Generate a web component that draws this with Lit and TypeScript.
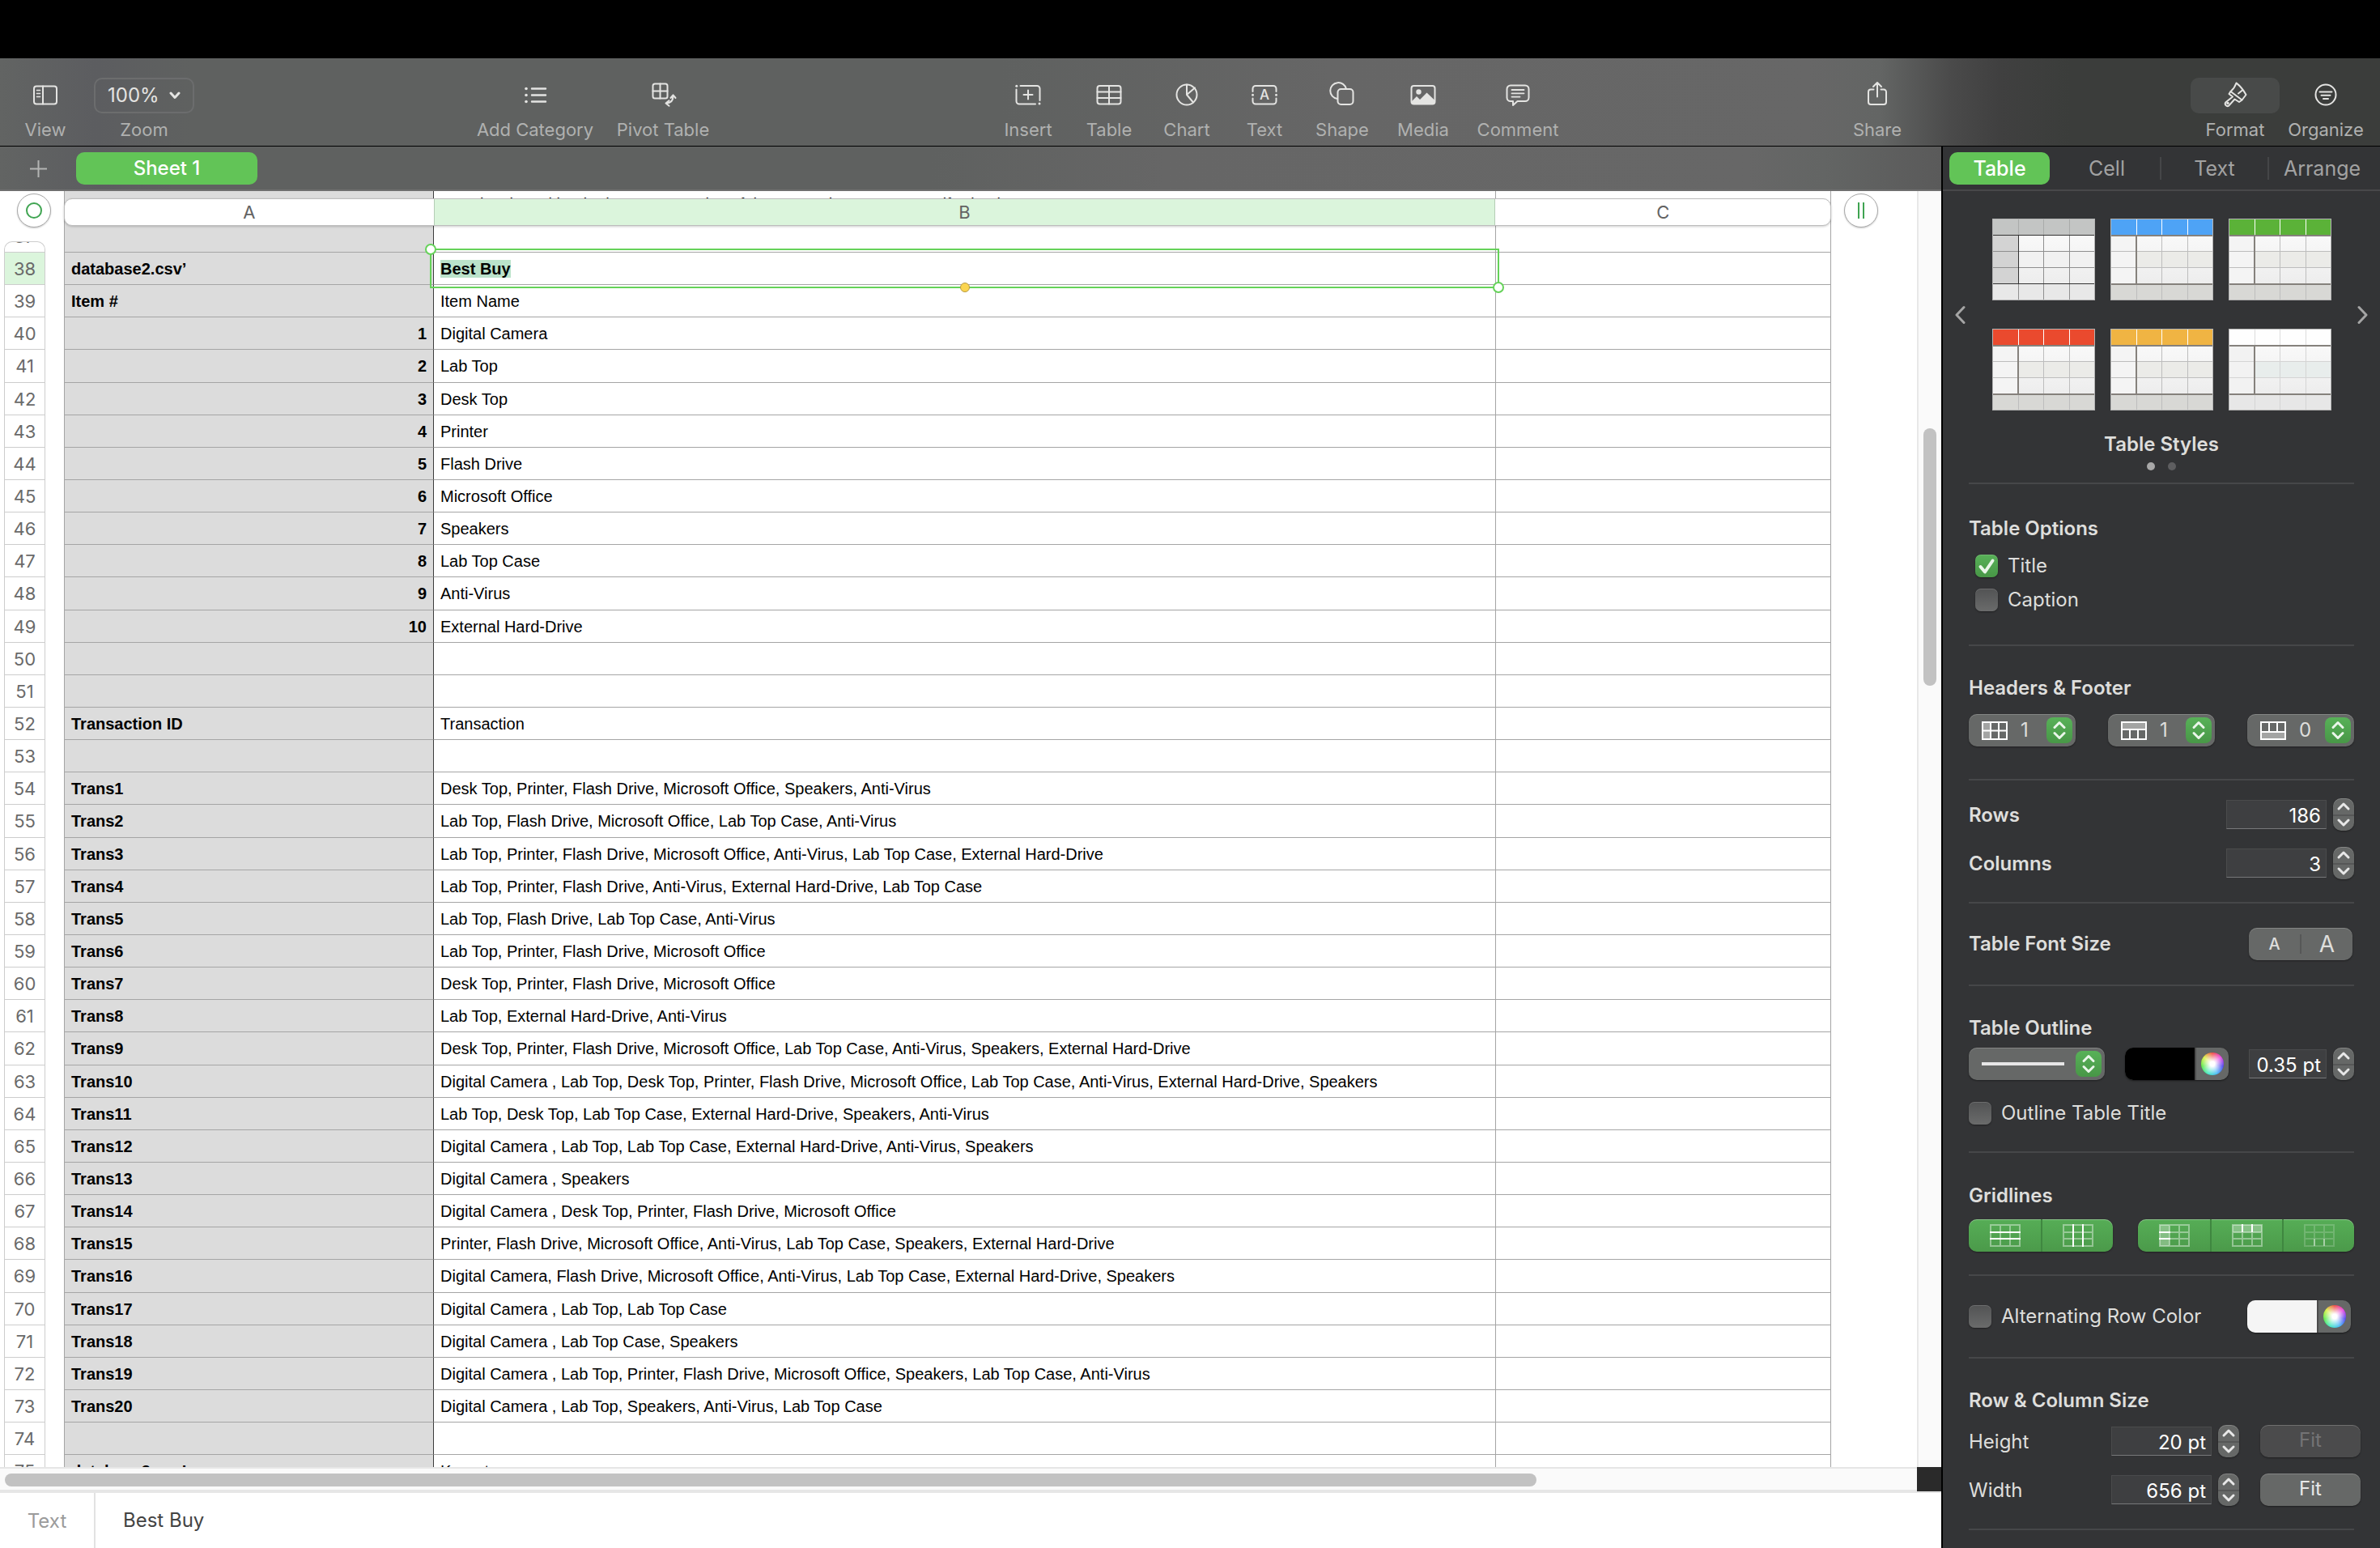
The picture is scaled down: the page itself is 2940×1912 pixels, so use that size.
import { LitElement, html, css, svg, nothing } from "lit";
import { customElement } from "lit/decorators.js";
import { classMap } from "lit/directives/class-map.js";
import { styleMap } from "lit/directives/style-map.js";

type Row = { n: number; a: string; b: string };

const rows: Row[] = [
  { n: 36, a: "Team Memo", b: "A Project in Oakland: The Country Price of the Bay Delaware Day, Bedford Lake" },
  { n: 37, a: "", b: "" },
  { n: 38, a: "database2.csv’", b: "Best Buy" },
  { n: 39, a: "Item #", b: "Item Name" },
  { n: 40, a: "1", b: "Digital Camera" },
  { n: 41, a: "2", b: "Lab Top" },
  { n: 42, a: "3", b: "Desk Top" },
  { n: 43, a: "4", b: "Printer" },
  { n: 44, a: "5", b: "Flash Drive" },
  { n: 45, a: "6", b: "Microsoft Office" },
  { n: 46, a: "7", b: "Speakers" },
  { n: 47, a: "8", b: "Lab Top Case" },
  { n: 48, a: "9", b: "Anti-Virus" },
  { n: 49, a: "10", b: "External Hard-Drive" },
  { n: 50, a: "", b: "" },
  { n: 51, a: "", b: "" },
  { n: 52, a: "Transaction ID", b: "Transaction" },
  { n: 53, a: "", b: "" },
  { n: 54, a: "Trans1", b: "Desk Top, Printer, Flash Drive, Microsoft Office, Speakers, Anti-Virus" },
  { n: 55, a: "Trans2", b: "Lab Top, Flash Drive, Microsoft Office, Lab Top Case, Anti-Virus" },
  { n: 56, a: "Trans3", b: "Lab Top, Printer, Flash Drive, Microsoft Office, Anti-Virus, Lab Top Case, External Hard-Drive" },
  { n: 57, a: "Trans4", b: "Lab Top, Printer, Flash Drive, Anti-Virus, External Hard-Drive, Lab Top Case" },
  { n: 58, a: "Trans5", b: "Lab Top, Flash Drive, Lab Top Case, Anti-Virus" },
  { n: 59, a: "Trans6", b: "Lab Top, Printer, Flash Drive, Microsoft Office" },
  { n: 60, a: "Trans7", b: "Desk Top, Printer, Flash Drive, Microsoft Office" },
  { n: 61, a: "Trans8", b: "Lab Top, External Hard-Drive, Anti-Virus" },
  { n: 62, a: "Trans9", b: "Desk Top, Printer, Flash Drive, Microsoft Office, Lab Top Case, Anti-Virus, Speakers, External Hard-Drive" },
  { n: 63, a: "Trans10", b: "Digital Camera , Lab Top, Desk Top, Printer, Flash Drive, Microsoft Office, Lab Top Case, Anti-Virus, External Hard-Drive, Speakers" },
  { n: 64, a: "Trans11", b: "Lab Top, Desk Top, Lab Top Case, External Hard-Drive, Speakers, Anti-Virus" },
  { n: 65, a: "Trans12", b: "Digital Camera , Lab Top, Lab Top Case, External Hard-Drive, Anti-Virus, Speakers" },
  { n: 66, a: "Trans13", b: "Digital Camera , Speakers" },
  { n: 67, a: "Trans14", b: "Digital Camera , Desk Top, Printer, Flash Drive, Microsoft Office" },
  { n: 68, a: "Trans15", b: "Printer, Flash Drive, Microsoft Office, Anti-Virus, Lab Top Case, Speakers, External Hard-Drive" },
  { n: 69, a: "Trans16", b: "Digital Camera, Flash Drive, Microsoft Office, Anti-Virus, Lab Top Case, External Hard-Drive, Speakers" },
  { n: 70, a: "Trans17", b: "Digital Camera , Lab Top, Lab Top Case" },
  { n: 71, a: "Trans18", b: "Digital Camera , Lab Top Case, Speakers" },
  { n: 72, a: "Trans19", b: "Digital Camera , Lab Top, Printer, Flash Drive, Microsoft Office, Speakers, Lab Top Case, Anti-Virus" },
  { n: 73, a: "Trans20", b: "Digital Camera , Lab Top, Speakers, Anti-Virus, Lab Top Case" },
  { n: 74, a: "", b: "" },
  { n: 75, a: "database3.csv’", b: "K-mart" },
];

const SELECTED = 38;
const isTall = (n: number) => n % 7 === 6 && n > 40;

const icons = {
  view: svg`<rect x="6" y="9.5" width="28" height="22" rx="3"/><path d="M17 9.5v22"/><path d="M9.5 14.5h4M9.5 18.5h4M9.5 22.5h4" stroke-width="1.6"/>`,
  category: svg`<g fill="currentColor" stroke="none"><circle cx="9" cy="12.5" r="1.8"/><circle cx="9" cy="20.5" r="1.8"/><circle cx="9" cy="28.5" r="1.8"/></g><path d="M16 12.5h17M16 20.5h17M16 28.5h17" stroke-width="2.4"/>`,
  pivot: svg`<rect x="7.5" y="6.5" width="18" height="18" rx="2.5"/><path d="M16.5 6.5v18M7.5 15.5h18M32.5 21c0 6-3 9.500-8.500 9.500M29.500 24l3-3.600 3 3.600M27.500 27.200L23.500 30.500l4 3.300"/>`,
  insert: svg`<path d="M10.500 9H31a3.500 3.500 0 0 1 3.500 3.500V27M29 31.500H9A3.500 3.500 0 0 1 5.500 28V13.500M20 14.500v11M14.500 20h11"/><g fill="currentColor" stroke="none"><circle cx="5.800" cy="9.300" r="1.500"/><circle cx="34" cy="31" r="1.500"/></g>`,
  table: svg`<rect x="5.500" y="9" width="29" height="22.500" rx="3"/><path d="M20 9v22.500M5.500 16.500h29M5.500 24h29"/>`,
  chart: svg`<circle cx="20" cy="20" r="12.500"/><path d="M20 7.500V20l10-8.500M20 20l8 9.500"/>`,
  text: svg`<path d="M5.500 16v-3.500A3.500 3.500 0 0 1 9 9h22a3.500 3.500 0 0 1 3.500 3.500V16M5.500 24.500V28A3.500 3.500 0 0 0 9 31.500h22a3.500 3.500 0 0 0 3.500-3.500v-3.500"/><g fill="currentColor" stroke="none"><circle cx="5.500" cy="20.300" r="1.500"/><circle cx="34.500" cy="20.300" r="1.500"/><text x="20" y="26" text-anchor="middle" font-size="17" font-weight="500" font-family="Inter, sans-serif">A</text></g>`,
  shape: svg`<path d="M14 25A10 10 0 1 1 25 12.800"/><rect x="14.500" y="13" width="19" height="19" rx="4"/>`,
  media: svg`<rect x="5.500" y="9" width="29" height="22.500" rx="3"/><circle cx="14.500" cy="16.500" r="3.200" fill="currentColor" stroke="none"/><path d="M6 28l6-6 4 4 8.500-8.500L34 26.500V30l-2 1.500H8L6 30z" fill="currentColor" stroke="none"/>`,
  comment: svg`<path d="M11 8.500h18a4.500 4.500 0 0 1 4.500 4.500v10.500a4.500 4.500 0 0 1-4.500 4.500H19.500l-5.500 5V28H11a4.500 4.500 0 0 1-4.500-4.500V13A4.500 4.500 0 0 1 11 8.500z"/><path d="M12.500 14h15M12.500 18.300h15M12.500 22.600h10" stroke-width="1.800"/>`,
  share: svg`<path d="M15.500 13.500H12a3 3 0 0 0-3 3V29a3 3 0 0 0 3 3h16a3 3 0 0 0 3-3V16.500a3 3 0 0 0-3-3h-3.500M20 22.500V5.500M15 10l5-5 5 5"/>`,
  format: svg`<path d="M21.500 5.500c2.500 2 6.500 4.500 12 14.500l-5 6.500-14-10.500c3-2.500 5.500-6 7-10.500z"/><path d="M14.500 16l-2 3 4.500 3.500-8.800 7a3 3 0 0 0 4 4.200l7.300-8.200 5.500 3.500 3.500-2.500M24 18.500l5-4"/><circle cx="11" cy="30.500" r=".8" fill="currentColor"/>`,
  organize: svg`<circle cx="20" cy="20" r="12.500"/><path d="M12.500 16.500h15M14.500 20.700h11M17 25h6" stroke-width="2"/>`,
};

const icon = (name: keyof typeof icons) => html`<svg class="icon" viewBox="0 0 40 40" aria-hidden="true">${icons[name]}</svg>`;

const tool = (name: keyof typeof icons, label: string, size = "") => html`
  <button class="tool ${size}" type="button"><span class="glyph">${icon(name)}</span><span class="caption">${label}</span></button>`;

type Palette = { head: string; headLine: string; side: string; band: string; foot: string; rule: string; thin: string; width: number };
const tinted = (head: string): Palette => ({ head, headLine: "#ffffff", side: "#f4f4f4", band: "#ebebe8", foot: "#d8d8d5", rule: "#85817c", thin: "#bdbdbd", width: 2 });
const palettes: Palette[] = [
  { head: "#c3c5c4", headLine: "#a9abaa", side: "#d3d3d3", band: "#f1f1f1", foot: "#e8e8e8", rule: "#333333", thin: "#8f8f8f", width: 1 },
  tinted("#4ea3f6"),
  tinted("#5bb238"),
  tinted("#ea4a2e"),
  tinted("#f0b443"),
  { head: "#fefefe", headLine: "#dcdcdc", side: "#f2f2f2", band: "#e8edec", foot: "#e7e7e7", rule: "#85817c", thin: "#d4d4d4", width: 2 },
];

const thumb = (p: Palette) => html`
  <svg class="thumb" viewBox="0 0 127 101" aria-hidden="true" shape-rendering="crispEdges">
    <defs><linearGradient id="body" x1="0" y1="0" x2="0" y2="1"><stop offset="0" stop-color="#fdfdfd"/><stop offset="1" stop-color="#e9e9e9"/></linearGradient></defs>
    <rect width="127" height="101" fill="url(#body)"/>
    <rect y="0" width="127" height="20" fill=${p.head}/>
    <rect y="21" width="32" height="60" fill=${p.side}/>
    <rect x="32" y="41" width="95" height="20" fill=${p.band}/>
    <rect y="81" width="127" height="20" fill=${p.foot}/>
    <path d="M32.500 0v20M63.500 0v20M95.500 0v20" stroke=${p.headLine}/>
    <path d="M63.500 21v80M95.500 21v80M32.500 81v20M0 40.500h127M0 60.500h127" stroke=${p.thin}/>
    <path d="M0 20.500h127M0 80.500h127M32 20v60" stroke=${p.rule} stroke-width=${p.width}/>
    <rect x=".5" y=".5" width="126" height="100" fill="none" stroke="#b4b4b4"/>
  </svg>`;

const updown = html`<svg class="updown" viewBox="0 0 32 32" aria-hidden="true"><path d="M10 12.500l6-6 6 6M10 19.500l6 6 6-6"/></svg>`;

const stepper = (name: string) => html`
  <span class="stepper">
    <button type="button" aria-label="Increase ${name}"><svg viewBox="0 0 26 20" aria-hidden="true"><path d="M7 13l6-6 6 6"/></svg></button>
    <button type="button" aria-label="Decrease ${name}"><svg viewBox="0 0 26 20" aria-hidden="true"><path d="M7 7l6 6 6-6"/></svg></button>
  </span>`;

const headerIcons = [
  svg`<path d="M1 1h9v22H1z" fill="#fff" fill-opacity=".4" stroke="none"/><path d="M1 1h30v21H1zM11 1v21M21 1v21M1 11.500h30"/>`,
  svg`<path d="M1 1h30v8H1z" fill="#fff" fill-opacity=".4" stroke="none"/><path d="M1 1h30v21H1zM1 10h30M11 10v12M21 10v12"/>`,
  svg`<path d="M1 13h30v9H1z" fill="#fff" fill-opacity=".4" stroke="none"/><path d="M1 1h30v21H1zM1 13h30M11 1v12M21 1v12"/>`,
];

const lattice = svg`<path d="M1 1h36v26H1zM13 1v26M25 1v26M1 10h36M1 18h36" stroke-opacity=".4"/>`;
const gridIcons = {
  rows: svg`${lattice}<path d="M0 10h38M0 18h38"/>`,
  cols: svg`${lattice}<path d="M13 0v28M25 0v28"/>`,
  headCol: svg`<path d="M1 1h12v26H1z" fill="#fff" fill-opacity=".3" stroke="none"/>${lattice}<path d="M0 10h14M0 18h14"/>`,
  headRow: svg`<path d="M1 1h36v9H1z" fill="#fff" fill-opacity=".3" stroke="none"/>${lattice}<path d="M13 0v10M25 0v10"/>`,
  foot: svg`<g stroke-opacity=".18"><path d="M1 1h36v26H1zM13 1v26M25 1v26M1 10h36M1 18h36"/></g><path d="M13 18v9M25 18v9" stroke-opacity=".4"/>`,
};
const gridButton = (name: keyof typeof gridIcons, label: string, disabled = false) => html`
  <button type="button" aria-label=${label} ?disabled=${disabled}><svg viewBox="0 0 38 28" aria-hidden="true">${gridIcons[name]}</svg></button>`;

@customElement("app-root")
export class AppRoot extends LitElement {
  static styles = css`
    :host {
      display: flex;
      flex-direction: column;
      height: 100vh;
      overflow: hidden;
      background: #000;
      color: #dededc;
      font: 400 24px/32px Inter, "Noto Sans", sans-serif;
    }
    *, *::before, *::after { box-sizing: border-box; }
    button, input, select { font: inherit; color: inherit; margin: 0; padding: 0; border: 0; background: none; }
    svg { display: block; fill: none; }
    h2, h3 { margin: 0; font: inherit; font-weight: 600; }

    .toolbar {
      flex: none;
      display: grid;
      grid-template-columns: auto 339fr auto 320fr auto 331fr auto 338fr auto;
      margin-top: 72px;
      height: 109px;
      padding: 24px 11px 0 8px;
      border-bottom: 1px solid #000;
      background: linear-gradient(90deg, #626463 0%, #5c5d60 4%, #5f6160 8%, #5f6160 42%, #666 56%, #676767 76%, #636564 79%, #4a4a4a 82%, #404040 84%, #3b3d3b 87%);
    }
    .group { display: flex; }
    .g1 { grid-column: 1; gap: 9px; } .g2 { grid-column: 3; } .g3 { grid-column: 5; } .g4 { grid-column: 7; } .g5 { grid-column: 9; }
    .tool {
      display: flex; flex-direction: column; align-items: center;
      width: 96px; color: #e4e4e2;
    }
    .tool.m { width: 104px; } .tool.l { width: 130px; } .tool.xl { width: 158px; } .tool.f { width: 112px; }
    .glyph { display: flex; align-items: center; justify-content: center; height: 44px; border-radius: 10px; }
    .tool.active .glyph { width: 110px; background: #484a49; }
    .glyph .icon { margin-top: -2px; }
    .icon { width: 40px; height: 40px; stroke: currentColor; stroke-width: 2; stroke-linecap: round; stroke-linejoin: round; }
    .caption { margin-top: 6px; line-height: 28px; font-size: 22px; color: #b0b1b0; white-space: nowrap; }
    .zoom { position: relative; display: grid; width: 124px; height: 44px; border: 2px solid #6c6d6e; border-radius: 10px; }
    .zoom > * { grid-area: 1 / 1; }
    .zoom select { appearance: none; padding-left: 15px; line-height: 40px; }
    .zoom svg { justify-self: end; align-self: center; width: 14px; height: 10px; margin-right: 15px; stroke: #e4e4e2; stroke-width: 3; stroke-linecap: round; stroke-linejoin: round; pointer-events: none; }

    .work { flex: 1; min-height: 0; display: grid; grid-template-columns: minmax(0, 1fr) 542px; }
    .main { display: flex; flex-direction: column; min-height: 0; }
    .tabs {
      flex: none; display: flex; align-items: center; height: 55px; padding: 1px 0 0 36px; gap: 35px;
      border-bottom: 2px solid #6f6f6f;
      background: linear-gradient(90deg, #626463 0%, #5c5d60 5%, #5f6160 9%, #5f6160 48%, #666 60%, #676767 90%, #636564 94%, #5a5a5a 100%);
    }
    .add { width: 23px; height: 23px; }
    .add svg { width: 23px; height: 23px; stroke: #b4b5b4; stroke-width: 2; }
    .sheet-tab { width: 224px; height: 40px; border-radius: 10px; background: #62c457; color: #fff; font-weight: 500; }

    .canvas { flex: 1; min-height: 0; display: grid; grid-template-columns: minmax(0, 1fr) 30px; grid-template-rows: minmax(0, 1fr) 32px; background: #fff; color: #000; }
    .sheet { position: relative; display: grid; grid-template-columns: 79px minmax(0, 1fr); overflow: hidden; }
    .vtrack { border-left: 2px solid #e8e8e8; background: #fafafa; }
    .vthumb { width: 16px; height: 318px; margin: 293px 0 0 6px; border-radius: 8px; background: #c2c2c2; }
    .htrack { border-top: 2px solid #e6e6e6; border-bottom: 4px solid #e6e6e6; background: #fafafa; padding: 6px; }
    .hthumb { width: 80.300%; height: 16px; border-radius: 8px; background: #c2c2c2; }
    .corner { background: #2a2a2a; border-bottom: 2px solid #e4e4e4; }

    .rail { margin: 62px 23px 0 5px; overflow: hidden; border: 1px solid #cdcdcd; border-bottom: 0; border-radius: 10px 10px 0 0; }
    .rail ol { list-style: none; margin: -27px 0 0; padding: 0; }
    .rail li { height: 40px; border-bottom: 1px solid #cdcdcd; color: #6a6a6a; font-size: 22px; line-height: 40px; text-align: center; }
    .rail li.tall { height: 41px; }
    .rail li.on { background: #dbf5dc; }

    .grid { width: 2183px; margin-top: -4px; border-collapse: separate; border-spacing: 0; table-layout: fixed; font: 400 20px/24px "Liberation Sans", Arial, sans-serif; }
    .ca { width: 457px; } .cb { width: 1312px; } .cc { width: 414px; }
    .grid tr { height: 40px; }
    .grid tr.tall { height: 41px; }
    .grid th, .grid td { padding: 0 8px; border-bottom: 1px solid #a5a5a5; border-right: 1px solid #a5a5a5; text-align: left; white-space: nowrap; vertical-align: middle; }
    .grid th { font-weight: 700; background: #dcdcdc; border-left: 1px solid #a5a5a5; border-right-color: #3c3c3c; }
    .grid th.num { text-align: right; }
    .picked { position: relative; font-weight: 700; }
    .picked mark { background: #bbe3ca; color: inherit; }
    .frame { position: absolute; inset: -5px -5px -5px -5px; border: 2px solid #65d259; pointer-events: none; }
    .knob { position: absolute; width: 14px; height: 14px; border: 2px solid #65d259; border-radius: 50%; background: #fff; }
    .knob.start { left: -8px; top: -8px; }
    .knob.end { right: -8px; bottom: -8px; }
    .knob.fill { left: calc(50% - 6px); bottom: -7px; width: 12px; height: 12px; border: 1px solid #b89b45; background: #fbd550; }

    .columns { position: absolute; top: 9px; left: 79px; display: flex; width: 2183px; height: 34px; border: 1px solid #bdbdbd; border-radius: 10px; background: #fff; box-shadow: 0 1px 3px rgba(0,0,0,.2); overflow: hidden; }
    .columns button { color: #636363; font-size: 22px; line-height: 32px; border-right: 1px solid #b5cdb6; }
    .columns button:last-child { border-right: 0; }
    .columns .on { background: #dbf5dc; }
    .round { position: absolute; top: 3px; display: grid; place-items: center; width: 42px; height: 42px; border: 1px solid #a8a8a8; border-radius: 50%; background: #fff; box-shadow: 0 1px 2px rgba(0,0,0,.2); }
    .round svg { width: 20px; height: 20px; stroke: #3fa451; stroke-width: 2; }
    .round.left { left: 21px; }
    .round.right { left: 2278px; }

    .formula { flex: none; display: flex; height: 68px; background: #fff; color: #444; }
    .formula label { width: 118px; border-right: 2px solid #e2e2e2; text-align: center; line-height: 70px; color: #9b9b9b; }
    .formula input { flex: 1; padding-left: 34px; line-height: 70px; }

    .inspector { border-left: 2px solid #000; background: #333436; min-height: 0; overflow: hidden; }
    .modes { display: grid; grid-template-columns: repeat(4, 1fr); align-items: center; height: 55px; padding: 1px 6px 0 2px; border-bottom: 2px solid #48484a; color: #a2a2a2; font-size: 25px; }
    .modes button { height: 28px; line-height: 28px; border-left: 2px solid #454648; }
    .modes button:nth-child(-n+2) { border-left-color: transparent; }
    .modes .on { height: 40px; margin: 0 3px 0 6px; border: 0; border-radius: 10px; background: #62c457; color: #fff; font-weight: 500; }

    .section { margin: 0 32px; border-bottom: 2px solid #464749; }
    .gallery { display: grid; grid-template-columns: 1fr repeat(3, 127px) 1fr; column-gap: 19px; row-gap: 35px; margin: 34px -20px 0; }
    .gallery button { height: 101px; }
    .gallery .page { grid-row: 1 / 3; align-self: center; height: 32px; justify-self: start; margin-left: 2px; }
    .gallery .page.next { grid-column: 5; justify-self: end; margin: 0 2px 0 0; }
    .gallery .s0, .gallery .s3 { grid-column: 2; } .gallery .s1, .gallery .s4 { grid-column: 3; } .gallery .s2, .gallery .s5 { grid-column: 4; }
    .page svg { width: 14px; height: 24px; stroke: #a5a5a5; stroke-width: 3; stroke-linecap: round; stroke-linejoin: round; }
    .thumb { width: 127px; height: 101px; }
    .styles-title { margin-top: 26px; text-align: center; }
    .dots { display: flex; justify-content: center; gap: 16px; padding: 6px 0 15px; }
    .dots i { width: 10px; height: 10px; border-radius: 50%; background: #5e5e60; }
    .dots i.on { background: #a8a8a8; }

    .options { padding: 39px 0; }
    .headers { padding: 36px 0 40px; }
    .counts { padding: 22px 0 28px; }
    .single { padding: 30px 0; }
    .outline { padding: 36px 0 31px; }
    .lines { padding: 37px 0 28px; }
    .size { padding: 36px 0 28px; }

    .check { display: flex; align-items: center; gap: 12px; height: 32px; }
    .options .check { margin: 14px 0 0 8px; }
    .options .check + .check { margin-top: 10px; }
    .check input {
      appearance: none; display: grid; place-items: center; width: 28px; height: 28px; border-radius: 7px;
      background: linear-gradient(#525354, #6a6b6b); box-shadow: 0 1px 2px rgba(0,0,0,.4), inset 0 1px 0 rgba(255,255,255,.15);
    }
    .check input:checked { background: linear-gradient(#58b158, #489747); }
    .checkbox { display: grid; }
    .checkbox > * { grid-area: 1 / 1; }
    .checkbox svg { width: 28px; height: 28px; stroke: #eaf6ea; stroke-width: 4; stroke-linecap: round; stroke-linejoin: round; pointer-events: none; }

    .line { display: flex; align-items: center; height: 40px; }
    .line + .line { margin-top: 20px; }
    .line .name { flex: 1; }
    .line label.name { padding-top: 2px; }
    .strong { font-weight: 600; }
    .between { justify-content: space-between; }
    .headers .line { margin-top: 16px; }

    .pop { display: grid; width: 132px; height: 40px; border-radius: 10px; background: #666867; box-shadow: 0 1px 2px rgba(0,0,0,.4), inset 0 1px 0 rgba(255,255,255,.2); }
    .pop > * { grid-area: 1 / 1; }
    .pop select { appearance: none; width: 100%; padding-left: 64px; line-height: 40px; }
    .pop .sample { align-self: center; width: 32px; height: 23px; margin-left: 16px; stroke: #fff; stroke-width: 2; pointer-events: none; }
    .pop.wide { width: 168px; }
    .pop.wide select { color: transparent; }
    .pop.wide .stroke { align-self: center; width: 102px; height: 4px; margin-left: 16px; background: #e6e6e6; pointer-events: none; }
    .updown { justify-self: end; align-self: center; width: 32px; height: 32px; margin-right: 4px; border-radius: 8px; background: linear-gradient(#58b158, #489747); stroke: #eaf6ea; stroke-width: 3; stroke-linecap: round; stroke-linejoin: round; pointer-events: none; }

    .field { width: 124px; height: 36px; padding: 3px 6px 0 0; border: 1px solid #4a4b4c; border-bottom: 1px solid #77787a; background: #3e3f41; color: #fff; text-align: right; }
    .field.short { width: 96px; }
    .stepper { display: flex; flex-direction: column; width: 26px; height: 40px; margin-left: 8px; border-radius: 10px; background: #666867; box-shadow: 0 1px 2px rgba(0,0,0,.4), inset 0 1px 0 rgba(255,255,255,.2); }
    .stepper button { height: 20px; }
    .stepper button + button { border-top: 2px solid #565757; }
    .stepper svg { width: 26px; height: 20px; stroke: #e8e8e8; stroke-width: 3; stroke-linecap: round; stroke-linejoin: round; }
    .stepper button + button svg { margin-top: -2px; }

    .segments { display: flex; align-items: center; width: 128px; height: 40px; margin-right: 2px; border-radius: 10px; background: #666867; box-shadow: 0 1px 2px rgba(0,0,0,.4), inset 0 1px 0 rgba(255,255,255,.2); }
    .segments button { flex: 1; height: 24px; line-height: 24px; font-size: 20px; font-weight: 500; }
    .segments button + button { border-left: 2px solid #565757; font-size: 28px; font-weight: 400; }

    .well { display: flex; width: 128px; height: 40px; border-radius: 10px; overflow: hidden; background: #666867; box-shadow: 0 1px 2px rgba(0,0,0,.5); }
    .swatch { flex: 1; border-right: 2px solid #4c4c4c; }
    .wheel { display: grid; place-items: center; width: 40px; }
    .disc { width: 28px; height: 28px; border-radius: 50%; background: radial-gradient(circle, #fff 0 15%, rgba(255,255,255,0) 72%), conic-gradient(#f0443c, #e83ee0, #4b3ff0, #3fb8f5, #3fe8c0, #58e83f, #d8f03f, #f0443c); }
    .outline .line { margin-top: 8px; }
    .outline .between { height: 40px; }
    .outline .value { display: flex; align-items: center; }
    .outline .check { margin-top: 25px; }
    .single .well { margin-right: 4px; }

    .lines .line { margin-top: 13px; }
    .bar { display: flex; height: 40px; border-radius: 10px; background: linear-gradient(#56ad56, #4b9a4a); box-shadow: 0 1px 2px rgba(0,0,0,.4), inset 0 1px 0 rgba(255,255,255,.3); }
    .bar button { display: grid; place-items: center; width: 89px; }
    .bar button + button { border-left: 2px solid #3f8740; }
    .bar svg { width: 38px; height: 28px; stroke: #fff; stroke-width: 2; }

    .size .line { margin: 14px -8px 0 0; }
    .size .line + .line { margin-top: 20px; }
    .fit { width: 124px; height: 40px; margin-left: 26px; border-radius: 10px; background: #666867; box-shadow: 0 1px 2px rgba(0,0,0,.4), inset 0 1px 0 rgba(255,255,255,.2); color: #e8e8e8; padding-bottom: 2px; }
    .fit:disabled { background: #4b4b4c; color: #747475; }
  `;

  private cellRow({ n, a, b }: Row) {
    const on = n === SELECTED;
    return html`<tr class=${classMap({ tall: isTall(n) })}>
      <th scope="row" class=${classMap({ num: /^\d+$/.test(a) })}>${a}</th>
      <td class=${classMap({ picked: on })}>${on
        ? html`<mark>${b}</mark><span class="frame"><i class="knob start"></i><i class="knob fill"></i><i class="knob end"></i></span>`
        : b}</td>
      <td></td>
    </tr>`;
  }

  private sheet() {
    return html`
      <div class="sheet">
        <div class="rail"><ol>${rows.slice(1).map(r => html`<li class=${classMap({ tall: isTall(r.n), on: r.n === SELECTED })}>${r.n}</li>`)}</ol></div>
        <div>
          <table class="grid">
            <colgroup><col class="ca"><col class="cb"><col class="cc"></colgroup>
            <tbody>${rows.map(r => this.cellRow(r))}</tbody>
          </table>
        </div>
        <div class="columns">
          <button class="ca" type="button">A</button>
          <button class="cb on" type="button">B</button>
          <button class="cc" type="button">C</button>
        </div>
        <button class="round left" type="button" aria-label="Select table"><svg viewBox="0 0 20 20"><circle cx="10" cy="10" r="9"/></svg></button>
        <button class="round right" type="button" aria-label="Add column"><svg viewBox="0 0 20 20"><path d="M7 0v20M13 0v20"/></svg></button>
      </div>`;
  }

  private inspector() {
    const pop = (label: string, value: string, i: number) => html`
      <span class="pop">
        <select aria-label=${label}><option>${value}</option></select>
        <svg class="sample" viewBox="0 0 32 23" aria-hidden="true">${headerIcons[i]}</svg>${updown}
      </span>`;
    const well = (label: string, color: string) => html`
      <span class="well">
        <button class="swatch" type="button" aria-label=${label} style=${styleMap({ background: color })}></button>
        <button class="wheel" type="button" aria-label="${label} picker"><i class="disc"></i></button>
      </span>`;
    const check = (label: string, checked = false) => html`
      <label class="check"><span class="checkbox"><input type="checkbox" ?checked=${checked}>${checked
        ? html`<svg viewBox="0 0 28 28" aria-hidden="true"><path d="M6.500 15l5.500 6.500L21.500 7.500"/></svg>` : nothing}</span>${label}</label>`;
    const count = (id: string, label: string, value: string) => html`
      <div class="line"><label class="name strong" for=${id}>${label}</label><input class="field" id=${id} .value=${value}>${stepper(label)}</div>`;
    const size = (id: string, label: string, value: string, disabled: boolean) => html`
      <div class="line"><label class="name" for=${id}>${label}</label><input class="field" id=${id} .value=${value}>${stepper(label)}<button class="fit" type="button" ?disabled=${disabled}>Fit</button></div>`;

    return html`
      <aside class="inspector">
        <nav class="modes">
          <button class="on" type="button">Table</button><button type="button">Cell</button><button type="button">Text</button><button type="button">Arrange</button>
        </nav>
        <section class="section">
          <div class="gallery">
            <button class="page" type="button" aria-label="Previous styles"><svg viewBox="0 0 14 24"><path d="M12 2.500L3 12l9 9.500"/></svg></button>
            ${palettes.map((p, i) => html`<button class="s${i}" type="button" aria-label="Table style ${i + 1}">${thumb(p)}</button>`)}
            <button class="page next" type="button" aria-label="Next styles"><svg viewBox="0 0 14 24"><path d="M2 2.500l9 9.500-9 9.500"/></svg></button>
          </div>
          <h2 class="styles-title">Table Styles</h2>
          <div class="dots"><i class="on"></i><i></i></div>
        </section>
        <section class="section options"><h3>Table Options</h3>${check("Title", true)}${check("Caption")}</section>
        <section class="section headers">
          <h3>Headers &amp; Footer</h3>
          <div class="line between">${pop("Header columns", "1", 0)}${pop("Header rows", "1", 1)}${pop("Footer rows", "0", 2)}</div>
        </section>
        <section class="section counts">${count("rows", "Rows", "186")}${count("columns", "Columns", "3")}</section>
        <section class="section single">
          <div class="line"><span class="name strong">Table Font Size</span>
            <span class="segments"><button type="button" aria-label="Smaller">A</button><button type="button" aria-label="Larger">A</button></span></div>
        </section>
        <section class="section outline">
          <h3>Table Outline</h3>
          <div class="line between">
            <span class="pop wide"><select aria-label="Outline style"><option>Solid</option></select><i class="stroke"></i>${updown}</span>
            ${well("Outline color", "#000")}
            <span class="value"><input class="field short" aria-label="Outline width" .value=${"0.35 pt"}>${stepper("outline width")}</span>
          </div>
          ${check("Outline Table Title")}
        </section>
        <section class="section lines">
          <h3>Gridlines</h3>
          <div class="line between">
            <span class="bar">${gridButton("rows", "Body rows")}${gridButton("cols", "Body columns")}</span>
            <span class="bar">${gridButton("headCol", "Header column lines")}${gridButton("headRow", "Header row lines")}${gridButton("foot", "Footer lines", true)}</span>
          </div>
        </section>
        <section class="section single">
          <div class="line between">${check("Alternating Row Color")}${well("Row color", "#f5f5f5")}</div>
        </section>
        <section class="section size">
          <h3>Row &amp; Column Size</h3>
          ${size("height", "Height", "20 pt", true)}${size("width", "Width", "656 pt", false)}
        </section>
      </aside>`;
  }

  render() {
    return html`
      <header class="toolbar">
        <div class="group g1">
          ${tool("view", "View")}
          <label class="tool l"><span class="zoom"><select><option>100%</option></select><svg viewBox="0 0 14 10" aria-hidden="true"><path d="M2 2l5 5.500L12 2"/></svg></span><span class="caption">Zoom</span></label>
        </div>
        <div class="group g2">${tool("category", "Add Category", "xl")}${tool("pivot", "Pivot Table", "xl")}</div>
        <div class="group g3">
          ${tool("insert", "Insert", "m")}${tool("table", "Table")}${tool("chart", "Chart")}${tool("text", "Text")}${tool("shape", "Shape")}${tool("media", "Media", "m")}${tool("comment", "Comment", "l")}
        </div>
        <div class="group g4">${tool("share", "Share")}</div>
        <div class="group g5">${tool("format", "Format", "f active")}${tool("organize", "Organize", "f")}</div>
      </header>
      <div class="work">
        <main class="main">
          <nav class="tabs">
            <button class="add" type="button" aria-label="Add sheet"><svg viewBox="0 0 23 23"><path d="M11.500 1v21M1 11.500h21"/></svg></button>
            <button class="sheet-tab" type="button">Sheet 1</button>
          </nav>
          <div class="canvas">
            ${this.sheet()}
            <div class="vtrack"><div class="vthumb"></div></div>
            <div class="htrack"><div class="hthumb"></div></div>
            <div class="corner"></div>
          </div>
          <div class="formula"><label for="cell">Text</label><input id="cell" .value=${"Best Buy"}></div>
        </main>
        ${this.inspector()}
      </div>`;
  }
}
